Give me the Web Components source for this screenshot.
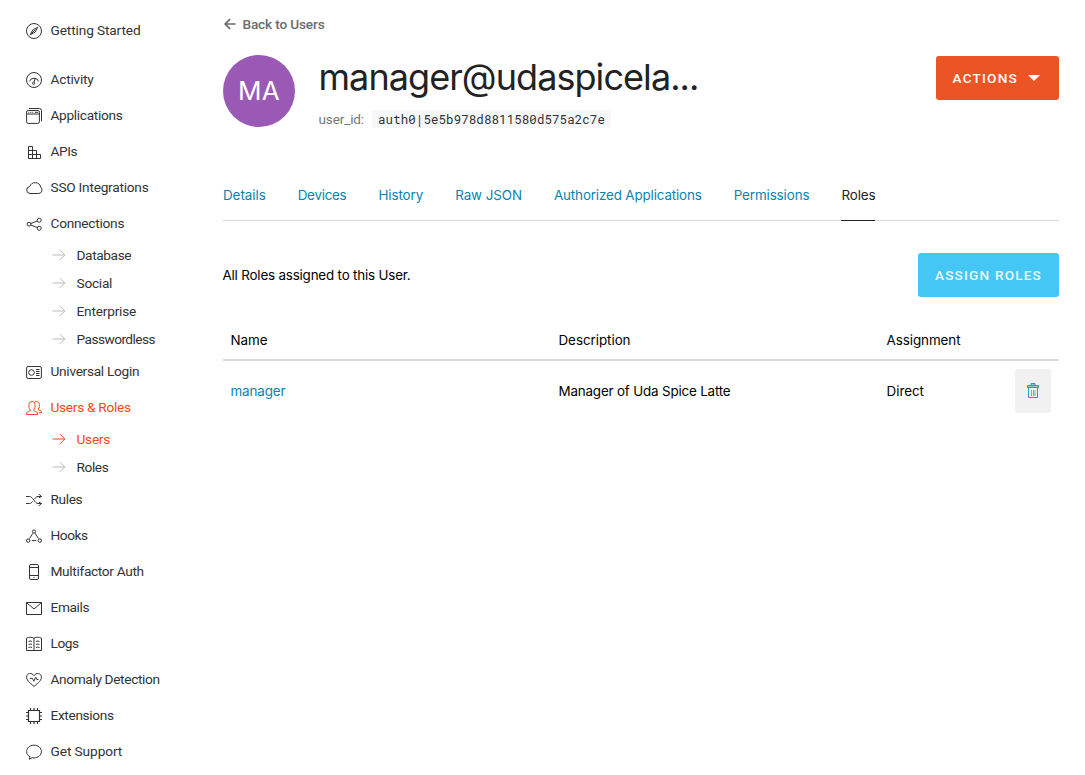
<!DOCTYPE html>
<html lang="en"><head><meta charset="utf-8"><title>User Roles</title>
<style>
html,body{margin:0;padding:0;background:#fff}
body{font-family:Inter,Roboto,sans-serif;color:#000}
</style></head><body>
<user-roles-page></user-roles-page>
<script>
/* Text run tracked out to a given width. */
class FitText extends HTMLElement{
  connectedCallback(){
    const r=this.attachShadow({mode:'open'});
    r.innerHTML='<style>:host{display:inline-block;white-space:nowrap}span{display:inline-block}</style><span><slot></slot></span>';
    const s=r.querySelector('span'),w=+this.getAttribute('w'),n=this.textContent.length;
    const fit=()=>{s.style.letterSpacing='0px';const d=(w-s.getBoundingClientRect().width)/n;s.style.letterSpacing=d+'px'};
    fit();
    document.fonts.ready.then(fit);
  }
}
customElements.define('fit-text',FitText);

const ICONS={
compass:'<circle cx="8" cy="8" r="7.5"/><path d="M11.8 4.2 9.2 9.2 4.2 11.8 6.8 6.8ZM9.5 6.5l-4 4"/>',
gauge:'<circle cx="8" cy="8" r="7.5"/><path d="M3.4 9.4A4.9 4.9 0 0 1 12.6 9.4M9.3 6 8 10"/><circle cx="7.6" cy="11.3" r="1.1"/>',
windows:'<rect x=".6" y="2.5" width="12.8" height="12.9" rx="1.6"/><path d="M.8 6h12.6M3 .5h10.5a2 2 0 0 1 2 2v10.8"/><path d="M2.3 4.3h1M4.3 4.3h1M6.3 4.3h1M9 4.3h3"/>',
blocks:'<path d="M2.5 2.5h4v12h-4zM2.5 6.5h8v8M2.5 10.5h12v4h-12M10.5 10.5v4"/>',
cloud:'<path d="M4 13.5a3.5 3.5 0 0 1-.6-6.9h.4A5.6 5.6 0 0 1 14.6 7 3.6 3.6 0 0 1 12.4 13.5Z"/>',
share:'<circle cx="3" cy="8.2" r="1.9"/><circle cx="13.2" cy="4.3" r="2"/><circle cx="13.2" cy="12.3" r="2"/><path d="m4.8 7.5 6.5-2.5M4.8 9l6.5 2.6"/>',
login:'<rect x=".6" y="2.5" width="14.8" height="12" rx="1.5"/><circle cx="5.5" cy="8.5" r="2.8"/><path d="M10 5.5h3.5M10 7.5h3.5M10 9.5h3.5M10 11.5h3.5"/>',
users:'<path d="M.6 14.5v-1.6c0-1.3 3.7-1.1 3.7-2.8C2.6 8.2 2.8 6.3 3 4.2 3.3 2.3 4.5 1.5 6 1.5S8.8 2.3 9 4.2c.2 2.1.3 4-1.3 5.9 0 1.7 3.8 1.5 3.8 2.8v1.6ZM9.4 1.6c2-.5 3.7.5 4 2.6.2 1.9.1 3.5-1.2 4.8 0 1.7 3.3 1.2 3.3 2.7v1h-2.7"/>',
shuffle:'<path d="M0 4.5h3.5c3.5 0 5 7 8.5 7h3.5M0 11.5h3.5c1.3 0 2.3-1 3.1-2.2M8.6 6.8C9.5 5.6 10.6 4.5 12 4.5h3.5M12.8 1.9l2.6 2.6-2.6 1.3M12.8 14l2.6-2.5-2.6-1.3"/>',
nodes:'<circle cx="8" cy="3.5" r="1.6"/><circle cx="2.2" cy="12.6" r="1.7"/><circle cx="13.8" cy="12.6" r="1.7"/><path d="M6.9 5.3 3.5 10.6M9.1 5.3l3.4 5.3M5.8 12.6h4.4"/>',
phone:'<rect x="3.5" y=".5" width="9" height="15" rx="1.5"/><path d="M3.5 3.5h9M3.5 11.5h9M7.5 13.6h1"/>',
mail:'<path d="M.5 2.5h15v12H.5zM.8 2.8 8 9l7.2-6.2"/>',
book:'<path d="M.5 2.2C3 .9 6 .9 8 2.2 10 .9 13 .9 15.5 2.2v12.3H.5ZM8 2.2v12.3M2.5 5.5q2-1 3.5 0M2.5 8.5q2-1 3.5 0M2.5 11.5q2-1 3.5 0M10 5.5q2-1 3.5 0M10 8.5q2-1 3.5 0M10 11.5q2-1 3.5 0"/>',
heart:'<path d="M8 14.5C5.8 12.3.6 9.3.6 5.2.6.8 6 .2 8 3.8 10 .2 15.4.8 15.4 5.2c0 4.1-5.2 7.1-7.4 9.3ZM3.8 6.4h2.7l1.3 2.8 2-4 1.1 2.3h1.6"/>',
chip:'<path stroke-width="1.2" d="M2.5 2.5h11v11h-11zM4.5 0v2.5M8 0v2.5M11.5 0v2.5M4.5 13.5V16M8 13.5V16M11.5 13.5V16M0 4.5h2.5M0 8h2.5M0 11.5h2.5M13.5 4.5H16M13.5 8H16M13.5 11.5H16"/>',
bubble:'<path d="M3.3 15.3 4 12.8C1.9 11.7.6 9.8.6 7.6.6 4 3.8 1.2 8 1.2s7.4 2.8 7.4 6.4S12 13.9 8 13.9q-1 0-1.8-.2Z"/>'
};
class NavItem extends HTMLElement{
  connectedCallback(){
    const sub=this.hasAttribute('sub');
    this.attachShadow({mode:'open'}).innerHTML=`<style>
    :host{display:flex;align-items:center;box-sizing:border-box;height:36px;padding-left:26px;font:13.7px/18px Roboto,sans-serif;color:#333}
    :host([sub]){height:28px;padding-left:52px}
    :host([active]){color:#fb4717}
    :host([first]){margin-bottom:13px}
    svg{width:16px;height:16px;flex:none;margin:2px 8.5px 0 0;overflow:visible;fill:none;stroke:currentColor;stroke-width:1}
    :host([sub]) svg{width:14px;height:14px;margin:0 10.5px 0 0;stroke:#bbb}
    :host([sub][active]) svg{stroke:#fb4717}
    </style><svg viewBox="${sub?'0 0 14 14':'0 0 16 16'}">${sub?'<path d="M.5 7h12M7.8 2l5 5-5 5"/>':ICONS[this.getAttribute('icon')]}</svg><fit-text w="${this.getAttribute('w')}">${this.getAttribute('label').replace('&','&amp;')}</fit-text>`;
  }
}
customElements.define('nav-item',NavItem);

class SideNav extends HTMLElement{
  connectedCallback(){
    const rows=[['Getting Started',90,'compass','first'],['Activity',43,'gauge'],['Applications',72,'windows'],['APIs',26.5,'blocks'],['SSO Integrations',98,'cloud'],['Connections',73.7,'share'],['Database',54.7,'','sub'],['Social',35.7,'','sub'],['Enterprise',59.6,'','sub'],['Passwordless',78.5,'','sub'],['Universal Login',88.8,'login'],['Users & Roles',80.2,'users','active'],['Users',33.5,'','sub active'],['Roles',31.8,'','sub'],['Rules',31.8,'shuffle'],['Hooks',37.2,'nodes'],['Multifactor Auth',93.3,'phone'],['Emails',38.6,'mail'],['Logs',28.2,'book'],['Anomaly Detection',109.2,'heart'],['Extensions',63.2,'chip'],['Get Support',71.7,'bubble']];
    this.attachShadow({mode:'open'}).innerHTML='<style>:host{display:block;padding-top:12px}</style>'+rows.map(([l,w,i,a])=>`<nav-item label="${l.replace('&','&amp;')}" w="${w}" icon="${i}" ${a||''}></nav-item>`).join('');
  }
}
customElements.define('side-nav',SideNav);

class UserHeader extends HTMLElement{
  connectedCallback(){
    this.attachShadow({mode:'open'}).innerHTML=`<style>
    :host{display:block}
    .back{display:flex;align-items:center;height:20px;font:500 13.6px/20px Roboto,sans-serif;color:#6b6b6b}
    .back svg{width:12px;height:12px;margin:0 7px 0 .5px;fill:none;stroke:currentColor;stroke-width:1.7}
    .user{display:flex;margin-top:21px;height:72px}
    .avatar{width:72px;height:72px;border-radius:50%;background:#9b59b6;color:#fff;display:flex;align-items:center;justify-content:center;font:26px/1 Inter,sans-serif;margin-right:24px}
    .info{flex:1}
    h1{margin:0 0 0 -.5px;font:400 36px/44px Inter,sans-serif;color:#222}
    .id{display:flex;align-items:center;height:18px;margin:11px 0 0 -.5px;font:13.6px/18px Roboto,sans-serif;color:#777}
    code{margin-left:8px;padding:0 6px;border-radius:3px;background:#f5f7f9;color:#333;height:18px;font:12.4px/18px "Roboto Mono","DejaVu Sans Mono",monospace}
    button{display:flex;align-items:center;margin-top:1px;width:123px;height:44px;padding:0 0 0 16.5px;border:0;border-radius:3px;background:#eb5424;color:#fff;font:500 13.6px/20px Roboto,sans-serif}
    button svg{width:12px;height:6px;margin-left:10px;fill:#fff}
    </style>
    <div class="back"><svg viewBox="0 0 12 12"><path d="M11.5 6H1.2M6 1.2 1.2 6 6 10.8"/></svg><fit-text w="82">Back to Users</fit-text></div>
    <div class="user"><div class="avatar"><fit-text w="42">MA</fit-text></div>
    <div class="info"><h1><fit-text w="380">manager@udaspicela...</fit-text></h1><div class="id"><fit-text w="45.5">user_id:</fit-text><code><fit-text w="227">auth0|5e5b978d8811580d575a2c7e</fit-text></code></div></div>
    <button><fit-text w="65.5">ACTIONS</fit-text><svg viewBox="0 0 12 6"><path d="M0 0h12L6 6z"/></svg></button></div>`;
  }
}
customElements.define('user-header',UserHeader);

class TabBar extends HTMLElement{
  connectedCallback(){
    const t=[['Details',42.7],['Devices',48.7],['History',44.8],['Raw JSON',66.8],['Authorized Applications',147.7],['Permissions',75.7],['Roles',34]];
    this.attachShadow({mode:'open'}).innerHTML=`<style>
    :host{display:flex;gap:32px;height:49px;border-bottom:1px solid #d9d9d9;font:13.4px/48px Inter,sans-serif;color:#0a84ae}
    a{height:49px}a:last-child{color:#222;border-bottom:1px solid #222}
    </style>`+t.map(([l,w])=>`<a><fit-text w="${w}">${l}</fit-text></a>`).join('');
  }
}
customElements.define('tab-bar',TabBar);

class RoleTable extends HTMLElement{
  connectedCallback(){
    this.attachShadow({mode:'open'}).innerHTML=`<style>
    :host{display:block;font:13.4px/20px Inter,sans-serif;color:#000}
    .top{display:flex;justify-content:space-between;align-items:center;height:44px}
    .top>fit-text,.row fit-text{margin-left:-.5px}
    .assign{display:flex;align-items:center;justify-content:center;width:141px;height:44px;padding:0;border:0;border-radius:3px;background:#44c7f4;color:#ecf9fe;font:500 13.6px/20px Roboto,sans-serif}
    .row{display:grid;grid-template-columns:328px 328px 1fr 36px;align-items:center;padding:0 8px;height:60px}
    .head{height:38px;margin-top:24px;border-bottom:2px solid #d9d9d9}
    a{color:#0a84ae}
    .trash{display:flex;align-items:center;justify-content:center;height:44px;width:36px;padding:0 0 1px;border:0;border-radius:3px;background:#f1f1f1}
    svg{width:12px;height:15px}
    </style>
    <div class="top"><fit-text w="188">All Roles assigned to this User.</fit-text><button class="assign"><fit-text w="107">ASSIGN ROLES</fit-text></button></div>
    <div class="row head"><div><fit-text w="37">Name</fit-text></div><div><fit-text w="72">Description</fit-text></div><div><fit-text w="74">Assignment</fit-text></div></div>
    <div class="row"><a><fit-text w="55">manager</fit-text></a><div><fit-text w="172">Manager of Uda Spice Latte</fit-text></div><div><fit-text w="37.5">Direct</fit-text></div>
    <button class="trash" aria-label="Remove"><svg viewBox="0 0 12 15" fill="none" stroke="#2f9abf"><path d="M4 2.5v-2h4v2" fill="#8dc5da"/><path d="M.5 2.5h11v2H.5z" fill="#8dc5da"/><path d="M1.5 4.5v10h9v-10"/><path d="M4.5 7v6M6.5 7v6M8 7v6" stroke-opacity=".75"/></svg></button></div>`;
  }
}
customElements.define('role-table',RoleTable);

class UserRolesPage extends HTMLElement{
  connectedCallback(){
    this.attachShadow({mode:'open'}).innerHTML=`<style>
    :host{display:grid;grid-template-columns:223px 836px;height:775px;overflow:hidden}
    main{padding-top:14px}tab-bar{margin-top:44px}role-table{margin-top:32px}
    </style><side-nav></side-nav><main><user-header></user-header><tab-bar></tab-bar><role-table></role-table></main>`;
  }
}
customElements.define('user-roles-page',UserRolesPage);
</script></body></html>
